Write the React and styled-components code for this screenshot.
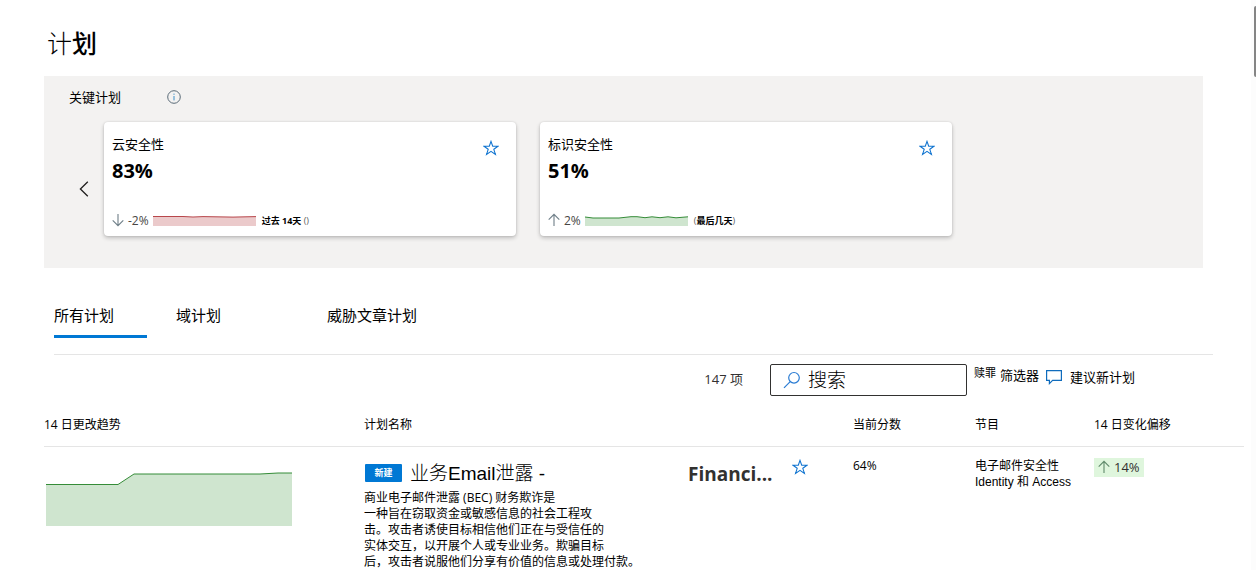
import React, { useState } from "react";
import styled, { createGlobalStyle } from "styled-components";

const GlobalStyle = createGlobalStyle`
  * {
    box-sizing: border-box;
  }

  body {
    margin: 0;
    height: 100vh;
    overflow: hidden;
    background-color: #fff;
    color: #000;
    font-family: "Open Sans", "Noto Sans CJK SC", sans-serif;
    font-size: 13px;
  }

  button, input {
    font-family: inherit;
    color: inherit;
  }

  svg {
    display: block;
    flex: none;
  }
`;

const Page = styled.main`
  padding: 24px 12px 0 44px;
`;

const Title = styled.h1`
  margin: 0 0 14px 3px;
  font-size: 25px;
  line-height: 38px;
  font-weight: 300;
`;

const Strong = styled.span`
  font-weight: 500;
`;

const KeyPanel = styled.section`
  margin-right: 41px;
  padding: 10px 25px 32px;
  background-color: #f3f2f1;
`;

const KeyHeading = styled.div`
  display: flex;
  align-items: center;
  gap: 46px;
  margin-bottom: 14px;
`;

const KeyTitle = styled.h2`
  margin: 0;
  font-size: 13px;
  line-height: 22px;
  font-weight: 400;
`;

const IconButton = styled.button`
  display: inline-flex;
  align-items: center;
  justify-content: center;
  padding: 0;
  border: none;
  background: none;
  cursor: pointer;
`;

const Carousel = styled.div`
  display: flex;
  align-items: stretch;
`;

const PrevButton = styled(IconButton)`
  width: 35px;
  padding: 20px 6px 0 0;
`;

const CardList = styled.div`
  display: flex;
  flex: 1;
  gap: 24px;
`;

const Card = styled.article`
  display: flex;
  flex-direction: column;
  flex: 0 1 412px;
  min-height: 114px;
  padding: 13px 8px 7px;
  background-color: #fff;
  border-radius: 4px;
  box-shadow: 0 2px 4px rgba(0, 0, 0, 0.22), 0 0 2px rgba(0, 0, 0, 0.12);
`;

const CardTop = styled.div`
  display: flex;
  justify-content: space-between;
  padding-right: 9px;
`;

const CardTitle = styled.h3`
  margin: 0 0 4px;
  font-size: 13px;
  line-height: 18px;
  font-weight: 400;
`;

const Score = styled.div`
  font-size: 20px;
  line-height: 28px;
  font-weight: 700;
`;

const StarButton = styled(IconButton)`
  align-self: flex-start;
  margin-top: ${(p) => p.$top}px;
`;

const CardFooter = styled.div`
  display: flex;
  align-items: center;
  gap: 4px;
  margin-top: auto;
  height: 18px;
  font-size: 12px;
  color: #484644;
`;

const Period = styled.span`
  padding-left: 2px;
  font-size: 9px;
  color: #605e5c;

  b {
    color: #000;
  }
`;

const Tabs = styled.div`
  display: flex;
  align-items: flex-start;
  margin: 35px 31px 0 10px;
  padding-bottom: 16px;
  border-bottom: 1px solid #e5e5e5;
`;

const Tab = styled.button`
  width: ${(p) => p.$width}px;
  margin-right: ${(p) => p.$gap}px;
  height: 35px;
  padding: 0 0 8px;
  border: none;
  border-bottom: 3px solid ${(p) => (p.$active ? "#0078d4" : "transparent")};
  background: none;
  font-size: 15px;
  line-height: 20px;
  text-align: left;
  white-space: nowrap;
  cursor: pointer;
`;

const Toolbar = styled.div`
  display: flex;
  justify-content: flex-end;
  align-items: center;
  padding: 9px 109px 0 0;
`;

const Count = styled.span`
  margin-right: 27px;
  color: #323130;
  padding-bottom: 4px;
`;

const SearchBox = styled.label`
  display: flex;
  align-items: center;
  gap: 7px;
  width: 197px;
  height: 32px;
  padding: 0 12px;
  border: 1px solid #323130;
  border-radius: 2px;

  input {
    width: 100%;
    min-width: 0;
    padding: 0;
    border: none;
    outline: none;
    background: none;
    font-size: 19px;
    line-height: 28px;
    font-weight: 300;
  }

  input::placeholder {
    color: #000;
    opacity: 1;
  }
`;

const CommandButton = styled.button`
  display: flex;
  align-items: center;
  gap: ${(p) => p.$gap}px;
  margin-left: 7px;
  padding: 0 0 ${(p) => p.$bottom}px;
  border: none;
  background: none;
  font-size: 13px;
  line-height: 20px;
  white-space: nowrap;
  cursor: pointer;
`;

const SmallText = styled.span`
  font-size: 11px;
  line-height: 16px;
  padding-bottom: 4px;
`;

const Table = styled.table`
  width: 100%;
  table-layout: fixed;
  border-collapse: collapse;
  margin-top: 10px;
  font-size: 12px;
  line-height: 16px;
`;

const HeadCell = styled.th`
  width: ${(p) => (p.$width ? `${p.$width}px` : "auto")};
  height: 40px;
  padding: 0 0 1px;
  border-bottom: 1px solid #e5e5e5;
  font-weight: 400;
  text-align: left;
  white-space: nowrap;
`;

const Cell = styled.td`
  padding: 11px 0 0;
  vertical-align: top;
`;

const ChartCell = styled(Cell)`
  padding: 23px 0 0 2px;
`;

const NameRow = styled.div`
  display: flex;
  align-items: center;
  height: 32px;
`;

const NameLink = styled.a`
  display: flex;
  align-items: center;
  width: 324px;
  color: #000;
  text-decoration: none;
  white-space: nowrap;
`;

const Badge = styled.span`
  width: 37px;
  margin: 0 8px 2px 1px;
  background-color: #0078d4;
  color: #fff;
  border-radius: 1px;
  font-size: 9px;
  line-height: 18px;
  font-weight: 700;
  text-align: center;
`;

const Name = styled.span`
  font-family: "Liberation Sans", "Noto Sans CJK SC", sans-serif;
  font-size: 19px;
  line-height: 28px;
  font-weight: 300;
`;

const NameRest = styled.span`
  width: 104px;
  font-size: 19px;
  line-height: 28px;
  font-weight: 700;
  color: #323130;
`;

const Description = styled.p`
  margin: 0;
`;

const Programs = styled.div`
  font-family: "Liberation Sans", "Noto Sans CJK SC", sans-serif;
`;

const Shift = styled.span`
  display: inline-flex;
  align-items: center;
  gap: 4px;
  height: 19px;
  padding: 0 4px;
  background-color: #dff6dd;
  color: #323130;
  font-size: 13px;
`;

const ScrollTrack = styled.div`
  position: fixed;
  top: 0;
  right: 0;
  bottom: 0;
  width: 5px;
  padding: 6px 0 0 3px;
  background-color: #fcfcfc;
`;

const ScrollThumb = styled.div`
  height: 71px;
  background-color: #858585;
  border-radius: 2px 0 0 2px;
`;

const Star = () => (
  <svg width="16" height="16" viewBox="0 0 16 16" fill="none" stroke="#1074d0" strokeWidth="1.1">
    <path d="M8 1.4 9.7 6.2H15L10.8 9.3 12.4 14.4 8 11.3 3.6 14.4 5.2 9.3 1 6.2H6.3Z" />
  </svg>
);

const Arrow = ({ down, color }) => (
  <svg width="12" height="14" viewBox="0 0 12 14" fill="none" stroke={color} strokeWidth="1.1">
    <path d={down ? "M6 1V12.5M.7 7.3 6 12.6 11.3 7.3" : "M6 13V1.5M.7 6.7 6 1.4 11.3 6.7"} />
  </svg>
);

const Info = () => (
  <svg width="14" height="14" viewBox="0 0 14 14" fill="none" stroke="#5a6b78">
    <circle cx="7" cy="7" r="6.3" />
    <path d="M7 6v4.4M7 3.6v1.2" stroke="#3a8fc8" />
  </svg>
);

const Sparkline = ({ line, stroke, fill }) => (
  <svg width="103" height="11" viewBox="0 0 103 11">
    <path d={`${line}V11H0Z`} fill={fill} />
    <path d={line} fill="none" stroke={stroke} />
  </svg>
);

const cards = [
  {
    title: "云安全性",
    score: "83%",
    change: "-2%",
    down: true,
    line: "M0 1.5H30L40 2 50 1.6 80 2.1 103 1.6",
    stroke: "#b8474b",
    fill: "#ebcacb",
    period: <><b>过去 14天</b> ()</>,
  },
  {
    title: "标识安全性",
    score: "51%",
    change: "2%",
    down: false,
    line: "M0 2 8 3H34L46 1.7 52 1.7 60 2.7 67 1.8 75 2.7 83 1.8 91 2.8 103 1.8",
    stroke: "#358c38",
    fill: "#cfe5cf",
    period: <>(<b>最后几天</b>)</>,
  },
];

const tabs = [
  { label: "所有计划", width: 93, gap: 29 },
  { label: "域计划", width: 93, gap: 58 },
  { label: "威胁文章计划", width: 93, gap: 0 },
];

export default function App() {
  const [active, setActive] = useState(0);

  return (
    <>
      <GlobalStyle />
      <Page>
        <Title>计<Strong>划</Strong></Title>

        <KeyPanel>
          <KeyHeading>
            <KeyTitle>关键计划</KeyTitle>
            <IconButton aria-label="信息"><Info /></IconButton>
          </KeyHeading>
          <Carousel>
            <PrevButton aria-label="上一页">
              <svg width="10" height="16" viewBox="0 0 10 16" fill="none" stroke="#201f1e" strokeWidth="1.3">
                <path d="M8.8 .8 1.4 8 8.8 15.2" />
              </svg>
            </PrevButton>
            <CardList>
              {cards.map((card) => (
                <Card key={card.title}>
                  <CardTop>
                    <div>
                      <CardTitle>{card.title}</CardTitle>
                      <Score>{card.score}</Score>
                    </div>
                    <StarButton $top={5} aria-label="收藏"><Star /></StarButton>
                  </CardTop>
                  <CardFooter>
                    <Arrow down={card.down} color="#6f7f88" />
                    <span>{card.change}</span>
                    <Sparkline line={card.line} stroke={card.stroke} fill={card.fill} />
                    <Period>{card.period}</Period>
                  </CardFooter>
                </Card>
              ))}
            </CardList>
          </Carousel>
        </KeyPanel>

        <Tabs role="tablist">
          {tabs.map((tab, i) => (
            <Tab
              key={tab.label}
              role="tab"
              aria-selected={active === i}
              $active={active === i}
              $width={tab.width}
              $gap={tab.gap}
              onClick={() => setActive(i)}
            >
              {tab.label}
            </Tab>
          ))}
        </Tabs>

        <Toolbar>
          <Count>147 项</Count>
          <SearchBox>
            <svg width="18" height="18" viewBox="0 0 18 18" fill="none" stroke="#2b7cd3" strokeWidth="1.2">
              <circle cx="11" cy="6.8" r="5.3" />
              <path d="M7.2 10.6 1 16.8" />
            </svg>
            <input type="text" placeholder="搜索" aria-label="搜索" />
          </SearchBox>
          <CommandButton $gap={4} $bottom={10}>
            <SmallText>赎罪</SmallText>
            筛选器
          </CommandButton>
          <CommandButton $gap={8} $bottom={6}>
            <svg width="16" height="16" viewBox="0 0 16 16" fill="none" stroke="#0f6cbd" strokeWidth="1.2">
              <path d="M.6 1.6H15.4V11.4H6.6L3.4 14.6V11.4H.6Z" />
            </svg>
            建议新计划
          </CommandButton>
        </Toolbar>

        <Table>
          <thead>
            <tr>
              <HeadCell $width={320}>14 日更改趋势</HeadCell>
              <HeadCell>计划名称</HeadCell>
              <HeadCell $width={122}>当前分数</HeadCell>
              <HeadCell $width={119}>节目</HeadCell>
              <HeadCell $width={150}>14 日变化偏移</HeadCell>
            </tr>
          </thead>
          <tbody>
            <tr>
              <ChartCell>
                <svg width="246" height="56" viewBox="0 0 246 56">
                  <path d="M0 14.5H72L88 4H214L232 3H246V56H0Z" fill="#cfe5cf" />
                  <path d="M0 14.5H72L88 4H214L232 3H246" fill="none" stroke="#358c38" />
                </svg>
              </ChartCell>
              <Cell>
                <NameRow>
                  <NameLink href="#">
                    <Badge>新建</Badge>
                    <Name>业务Email泄露 -</Name>
                  </NameLink>
                  <NameRest>Financi...</NameRest>
                  <StarButton $top={1} aria-label="收藏"><Star /></StarButton>
                </NameRow>
                <Description>
                  商业电子邮件泄露 (BEC) 财务欺诈是<br />
                  一种旨在窃取资金或敏感信息的社会工程攻<br />
                  击。攻击者诱使目标相信他们正在与受信任的<br />
                  实体交互，以开展个人或专业业务。欺骗目标<br />
                  后，攻击者说服他们分享有价值的信息或处理付款。
                </Description>
              </Cell>
              <Cell>64%</Cell>
              <Cell>
                <Programs>
                  电子邮件安全性<br />
                  Identity 和 Access
                </Programs>
              </Cell>
              <Cell>
                <Shift>
                  <Arrow color="#5f8a6a" />
                  14%
                </Shift>
              </Cell>
            </tr>
          </tbody>
        </Table>
      </Page>
      <ScrollTrack>
        <ScrollThumb />
      </ScrollTrack>
    </>
  );
}
